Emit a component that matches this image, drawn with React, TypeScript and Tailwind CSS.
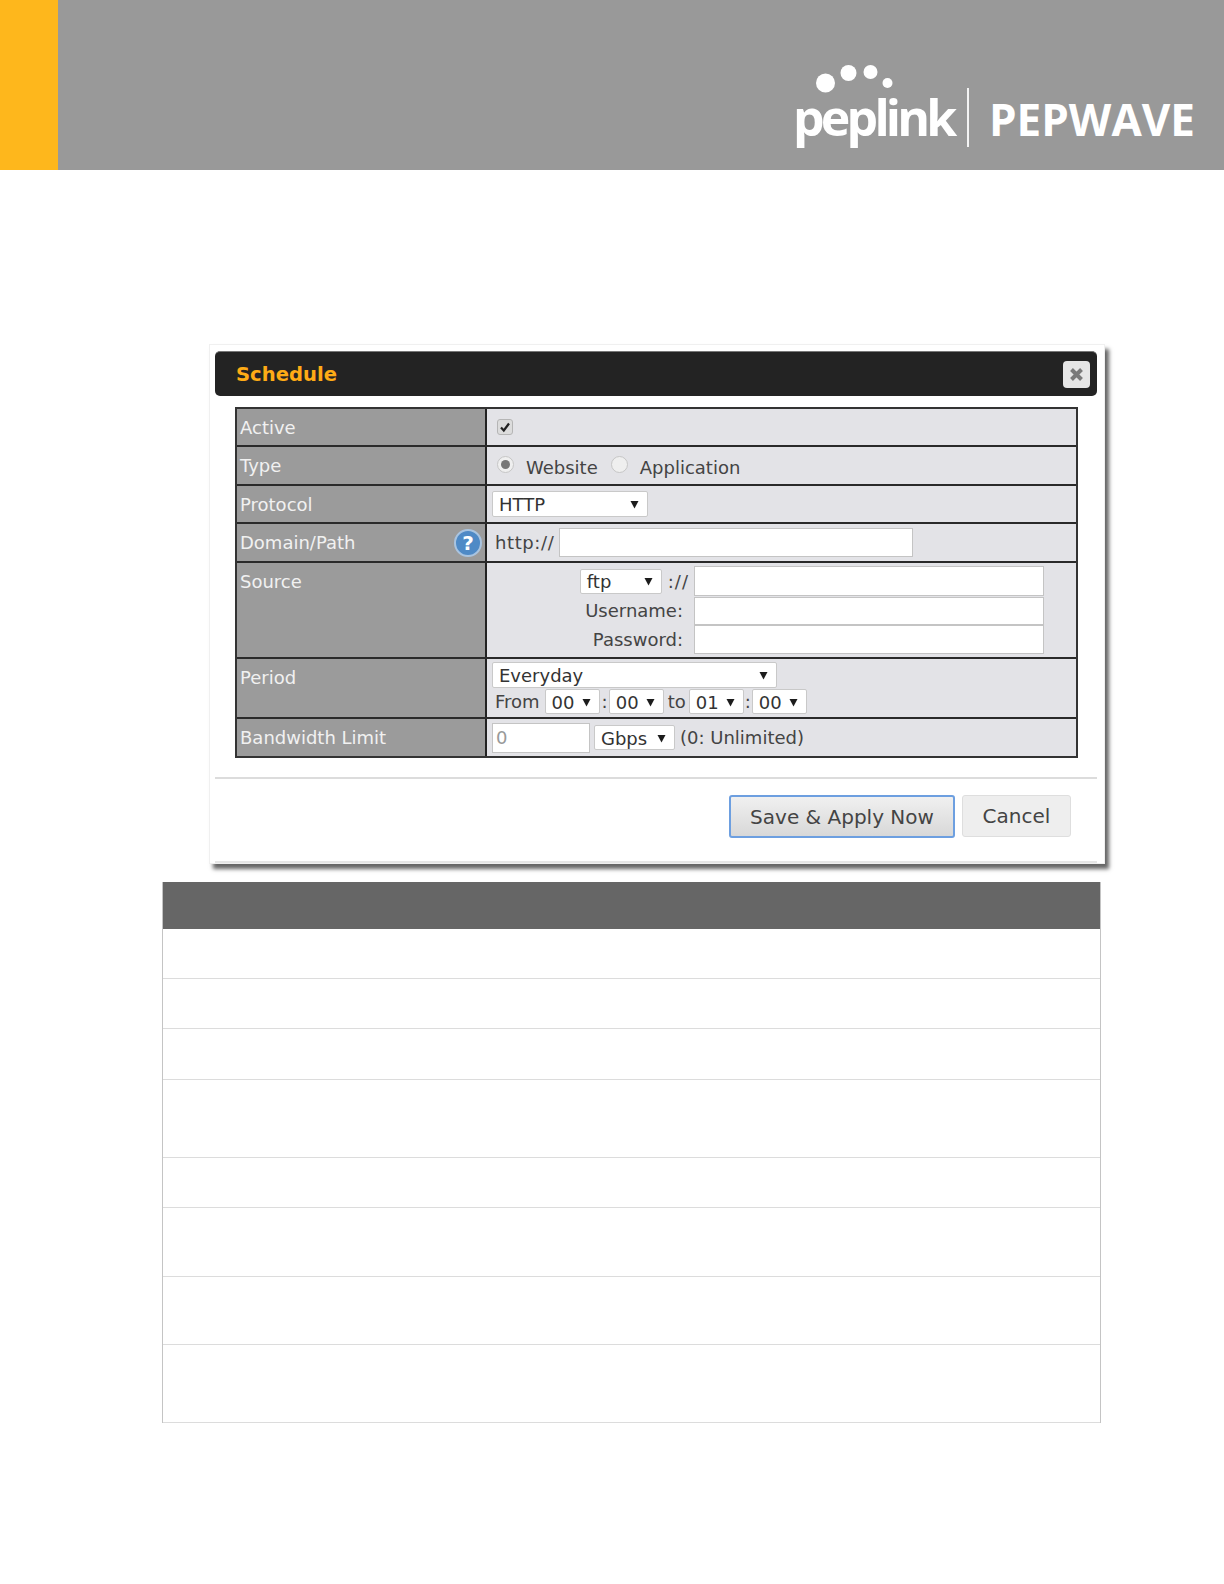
import type { ReactNode } from "react";

function Select({ label, className }: { label: string; className: string }) {
  return (
    <div
      className={`flex items-center justify-between rounded-[2px] border border-[#c9c9c9] bg-white pl-[6px] pr-[8px] pt-[2px] text-[18px] leading-none text-[#333] ${className}`}
    >
      <span>{label}</span>
      <svg width="9" height="9" viewBox="0 0 9 9" className="mb-[1px]">
        <path d="M0.5 1h8L4.5 8.5z" fill="#1c1c1c" />
      </svg>
    </div>
  );
}

function TextInput({ className }: { className: string }) {
  return <div className={`border border-[#c4c4c4] bg-white ${className}`} />;
}

function Row({
  label,
  height,
  top,
  aside,
  children,
}: {
  label: string;
  height: string;
  top?: boolean;
  aside?: ReactNode;
  children: ReactNode;
}) {
  return (
    <div className={`flex border-b-2 border-[#2a2a2a] last:border-b-0 ${height}`}>
      <div
        className={`flex w-[250px] shrink-0 justify-between border-r-2 border-[#222] bg-[#9b9b9b] pl-[3px] pr-[3px] text-[18px] text-[#f1f1f1] ${
          top ? "items-start pt-[5px]" : "items-center"
        }`}
      >
        <span>{label}</span>
        {aside}
      </div>
      <div className="flex-1 bg-[#e3e3e7] text-[18px] text-[#444]">{children}</div>
    </div>
  );
}

function Logo() {
  return (
    <div className="mb-[22px] mr-[29px] flex items-end">
      <div className="w-[164px]">
        <svg width="100" height="44" viewBox="0 0 100 44" className="ml-[21px]">
          <circle cx="11.5" cy="21" r="9.5" fill="#fff" />
          <circle cx="34.5" cy="11" r="8" fill="#fff" />
          <circle cx="56.5" cy="10" r="7" fill="#fff" />
          <circle cx="73.5" cy="21" r="5" fill="#fff" />
        </svg>
        <div className="mt-[-18px] h-[60px] font-['Open_Sans',sans-serif] text-[50px] font-bold leading-[58px] tracking-[-3.8px] text-white">
          peplink
        </div>
      </div>
      <div className="mb-[1px] ml-[10px] h-[59px] w-[2px] bg-[#f4f4f4]" />
      <div className="mb-[6px] ml-[20px] font-['Open_Sans',sans-serif] text-[44px] font-bold leading-[46px] text-white">
        PEPWAVE
      </div>
    </div>
  );
}

const rowHeights = ["h-[50px]", "h-[50px]", "h-[51px]", "h-[78px]", "h-[50px]", "h-[69px]", "h-[68px]", "h-[78px]"];

export default function App() {
  return (
    <div className="min-h-[1584px] bg-white font-['DejaVu_Sans',sans-serif]">
      <header className="flex h-[170px] items-end justify-between bg-[#999999]">
        <div className="h-full w-[58px] bg-[#feb71c]" />
        <Logo />
      </header>

      <div className="ml-[209px] mt-[174px] h-[520px] w-[896px] border border-[#f0f0f0] bg-white pl-[5px] pr-[7px] pt-[6px] shadow-[4px_5px_4px_#666]">
        <div className="flex h-[45px] items-center justify-between rounded-[5px] border-t border-[#777] bg-[#232323] pl-[21px] pr-[7px]">
          <span className="pt-[2px] text-[19.6px] font-bold text-[#feab16]">Schedule</span>
          <div className="flex h-[27px] w-[27px] items-center justify-center rounded-[4px] bg-[#e6e6e6]">
            <svg width="15" height="15" viewBox="0 0 15 15">
              <path d="M2.5 2.5l10 10M12.5 2.5l-10 10" stroke="#7a7a7a" strokeWidth="4" />
            </svg>
          </div>
        </div>

        <div className="ml-[20px] mt-[11px] w-[843px] border-2 border-[#333]">
          <Row label="Active" height="h-[38px]">
            <div className="flex h-full items-center pl-[10px]">
              <div className="flex h-[16px] w-[16px] items-center justify-center rounded-[3px] border border-[#b5b5b5] bg-[#dcdcdc]">
                <svg width="12" height="12" viewBox="0 0 12 12">
                  <path d="M2 6.5l2.8 3L10 2.5" fill="none" stroke="#222" strokeWidth="2.2" />
                </svg>
              </div>
            </div>
          </Row>
          <Row label="Type" height="h-[39px]">
            <div className="flex h-full items-center pl-[10px] pt-[3px]">
              <div className="mb-[5px] flex h-[17px] w-[17px] items-center justify-center rounded-full border border-[#c6c6c6] bg-[#efefef]">
                <div className="h-[9px] w-[9px] rounded-full bg-[#777]" />
              </div>
              <span className="ml-[12px]">Website</span>
              <div className="mb-[5px] ml-[13px] h-[17px] w-[17px] rounded-full border border-[#c6c6c6] bg-[#efefef]" />
              <span className="ml-[12px]">Application</span>
            </div>
          </Row>
          <Row label="Protocol" height="h-[38px]">
            <div className="flex h-full items-center pl-[5px]">
              <Select label="HTTP" className="h-[26px] w-[156px]" />
            </div>
          </Row>
          <Row
            label="Domain/Path"
            height="h-[39px]"
            aside={
              <div className="flex h-[28px] w-[28px] items-center justify-center rounded-full border-2 border-[#a9c4e0] bg-[#4f8ac6] text-[20px] font-bold leading-none text-white">
                ?
              </div>
            }
          >
            <div className="flex h-full items-center pl-[8px]">
              <span className="tracking-[0.6px]">http://</span>
              <TextInput className="ml-[5px] h-[29px] w-[354px]" />
            </div>
          </Row>
          <Row label="Source" height="h-[96px]" top>
            <div className="flex h-full w-[557px] flex-col items-end pt-[3px]">
              <div className="flex h-[30px] items-center">
                <Select label="ftp" className="h-[25px] w-[82px]" />
                <span className="ml-[6px] mr-[5px] tracking-[1px]">://</span>
                <TextInput className="h-[30px] w-[350px]" />
              </div>
              <div className="flex h-[29px] items-center">
                <span className="mr-[11px]">Username:</span>
                <TextInput className="h-[28px] w-[350px]" />
              </div>
              <div className="flex h-[29px] items-center">
                <span className="mr-[11px]">Password:</span>
                <TextInput className="h-[29px] w-[350px]" />
              </div>
            </div>
          </Row>
          <Row label="Period" height="h-[60px]" top>
            <div className="flex h-full flex-col pl-[5px] pt-[3px]">
              <Select label="Everyday" className="h-[26px] w-[285px]" />
              <div className="flex h-[26px] items-center pl-[3px] pt-[1px]">
                <span>From</span>
                <Select label="00" className="ml-[5px] h-[25px] w-[55px]" />
                <span className="ml-[2px] mr-[1px]">:</span>
                <Select label="00" className="h-[25px] w-[55px]" />
                <span className="ml-[4px] mr-[3px]">to</span>
                <Select label="01" className="h-[25px] w-[55px]" />
                <span className="mx-[1px]">:</span>
                <Select label="00" className="h-[25px] w-[55px]" />
              </div>
            </div>
          </Row>
          <Row label="Bandwidth Limit" height="h-[37px]">
            <div className="flex h-full items-center pl-[5px]">
              <div className="flex h-[30px] w-[98px] items-center border border-[#c4c4c4] bg-white pl-[3px] text-[#999]">
                0
              </div>
              <Select label="Gbps" className="ml-[4px] h-[25px] w-[81px]" />
              <span className="ml-[5px]">(0: Unlimited)</span>
            </div>
          </Row>
        </div>

        <div className="mt-[19px] h-[2px] bg-[#dcdcdc]" />

        <div className="mr-[26px] mt-[16px] flex justify-end gap-[7px] text-[20px] text-[#444]">
          <div className="flex h-[43px] w-[226px] items-center justify-center rounded-[3px] border-2 border-[#6d9fe0] bg-gradient-to-b from-[#f0f0f0] to-[#d8d8d8]">
            Save &amp; Apply Now
          </div>
          <div className="flex h-[42px] w-[109px] items-center justify-center rounded-[3px] border border-[#dedede] bg-[#eeeeee]">
            Cancel
          </div>
        </div>

        <div className="mt-[23px] h-[2px] bg-[#e6e6e6]" />
      </div>

      <div className="ml-[162px] mt-[18px] w-[939px] border-x border-[#c4c4c4]">
        <div className="h-[47px] bg-[#666666]" />
        {rowHeights.map((height, i) => (
          <div key={i} className={`border-b border-[#dcdcdc] bg-white ${height}`} />
        ))}
      </div>
    </div>
  );
}
